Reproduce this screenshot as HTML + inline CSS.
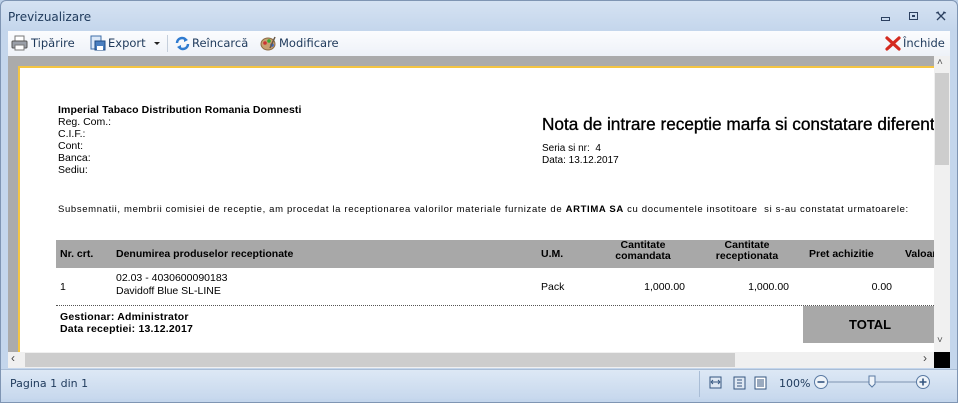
<!DOCTYPE html>
<html><head><meta charset="utf-8"><style>
*{margin:0;padding:0;box-sizing:border-box}
body{width:958px;height:403px;overflow:hidden;background:#bcd0e8;font-family:"Liberation Sans",sans-serif;position:relative}
.a{position:absolute;white-space:nowrap}
.ui{font-family:"DejaVu Sans","Liberation Sans",sans-serif;font-size:11.5px;color:#1e395b}
.doc{font-size:10px;color:#000;font-family:"Liberation Sans",sans-serif}
.b{font-weight:bold}
</style></head><body>
<div class="a" style="left:0;top:0;width:958px;height:403px;border:1px solid #7f95b3;border-radius:6px 6px 0 0;background:linear-gradient(#d5e2f2,#c4d6ec 30px,#c4d6ec)"></div>
<div class="a ui" style="left:8px;top:10px;font-size:12px;color:#1e395b">Previzualizare</div>
<div class="a" style="left:881px;top:17px;width:9px;height:4px;border:1px solid #2c4060"></div>
<div class="a" style="left:909px;top:12px;width:9px;height:8px;border:1px solid #2c4060"><div style="margin:2px;width:3px;height:2px;border:1px solid #2c4060"></div></div>
<svg class="a" style="left:935px;top:11px" width="12" height="11"><path d="M2 1l8 8M10 1L2 9" stroke="#2c4060" stroke-width="1.3"/><path d="M1 2l3-1M11 2l-3-1" stroke="#2c4060"/></svg>
<div class="a" style="left:8px;top:31px;width:942px;height:25px;background:linear-gradient(#fbfcfe,#eef2f8)"></div>
<svg class="a" style="left:11px;top:35px" width="18" height="16"><rect x="4" y="1" width="9" height="5" fill="#fff" stroke="#777"/><rect x="1" y="6" width="15" height="7" rx="1" fill="#9a9fa8" stroke="#555"/><rect x="4" y="10" width="9" height="5" fill="#fff" stroke="#777"/></svg>
<div class="a ui" style="left:31px;top:36px">Tipărire</div>
<svg class="a" style="left:90px;top:35px" width="16" height="16"><rect x="1" y="1" width="10" height="13" fill="#dbe8f8" stroke="#3f6ea8"/><rect x="5" y="6" width="10" height="9" fill="#4a7fc0" stroke="#1f4b85"/><rect x="7" y="11" width="6" height="4" fill="#fff"/></svg>
<div class="a ui" style="left:108px;top:36px">Export</div>
<div class="a" style="left:154px;top:42px;border-left:3px solid transparent;border-right:3px solid transparent;border-top:3px solid #222"></div>
<div class="a" style="left:167px;top:35px;width:1px;height:17px;background:#c5cfdc"></div>
<svg class="a" style="left:174px;top:35px" width="17" height="16"><path d="M3 8a5 5 0 0 1 9-3" stroke="#2f7bd0" stroke-width="2.5" fill="none"/><path d="M10 2l4 3-4 2z" fill="#2f7bd0"/><path d="M14 9a5 5 0 0 1-9 3" stroke="#2f7bd0" stroke-width="2.5" fill="none"/><path d="M7 15l-4-3 4-2z" fill="#2f7bd0"/></svg>
<div class="a ui" style="left:192px;top:36px">Reîncarcă</div>
<svg class="a" style="left:260px;top:35px" width="17" height="16"><ellipse cx="8" cy="9" rx="7" ry="6" fill="#c8a070" stroke="#8a6a44"/><circle cx="5" cy="8" r="1.8" fill="#c33"/><circle cx="9" cy="6" r="1.8" fill="#3a3"/><circle cx="12" cy="10" r="1.8" fill="#36c"/><path d="M10 13l5-11" stroke="#654" stroke-width="1.5"/></svg>
<div class="a ui" style="left:279px;top:36px">Modificare</div>
<svg class="a" style="left:885px;top:36px" width="16" height="15"><path d="M2 2l12 11M14 2L2 13" stroke="#d42a1f" stroke-width="3.2" stroke-linecap="round"/></svg>
<div class="a ui" style="left:903px;top:36px">Închide</div>
<div class="a" style="left:8px;top:56px;width:926px;height:296px;background:#ababab;overflow:hidden">
 <div class="a" style="left:10px;top:10px;width:930px;height:300px;background:#fff;border-left:2px solid #f4c542;border-top:2px solid #f4c542"></div>
</div>
<div class="a" style="left:19px;top:67px;width:915px;height:285px;overflow:hidden">
 <div class="a doc b" style="left:39px;top:37px;font-size:10.5px;letter-spacing:0.1px">Imperial Tabaco Distribution Romania Domnesti</div>
 <div class="a doc" style="left:39px;top:49px;line-height:12px;font-size:10.5px">Reg. Com.:<br>C.I.F.:<br>Cont:<br>Banca:<br>Sediu:</div>
 <div class="a doc" style="left:523px;top:47px;font-size:17.2px;-webkit-text-stroke:0.35px #000">Nota de intrare receptie marfa si constatare diferente</div>
 <div class="a doc" style="left:523px;top:76px;line-height:11.5px">Seria si nr:&nbsp; 4<br>Data: 13.12.2017</div>
 <div class="a doc" style="left:39px;top:137px;font-size:9.5px;letter-spacing:0.65px">Subsemnatii, membrii comisiei de receptie, am procedat la receptionarea valorilor materiale furnizate de <b>ARTIMA SA</b> cu documentele insotitoare&nbsp; si s-au constatat urmatoarele:</div>
 <div class="a" style="left:37px;top:173px;width:880px;height:28px;background:#a8a8a8"></div>
 <div class="a doc b" style="left:41px;top:181px;font-size:10.5px">Nr. crt.</div>
 <div class="a doc b" style="left:97px;top:181px;font-size:10.5px">Denumirea produselor receptionate</div>
 <div class="a doc b" style="left:522px;top:181px;font-size:10.5px">U.M.</div>
 <div class="a doc b" style="left:574px;top:173px;width:100px;text-align:center;line-height:11px;font-size:10.5px">Cantitate<br>comandata</div>
 <div class="a doc b" style="left:678px;top:173px;width:100px;text-align:center;line-height:11px;font-size:10.5px">Cantitate<br>receptionata</div>
 <div class="a doc b" style="left:790px;top:181px;font-size:10.5px">Pret achizitie</div>
 <div class="a doc b" style="left:886px;top:181px;font-size:10.5px">Valoare</div>
 <div class="a doc" style="left:41px;top:214px;font-size:10.5px">1</div>
 <div class="a doc" style="left:97px;top:205px;line-height:13px;font-size:10.5px">02.03 - 4030600090183<br>Davidoff Blue SL-LINE</div>
 <div class="a doc" style="left:522px;top:214px;font-size:10.5px">Pack</div>
 <div class="a doc" style="left:566px;top:214px;width:100px;text-align:right;font-size:10.5px">1,000.00</div>
 <div class="a doc" style="left:670px;top:214px;width:100px;text-align:right;font-size:10.5px">1,000.00</div>
 <div class="a doc" style="left:773px;top:214px;width:100px;text-align:right;font-size:10.5px">0.00</div>
 <div class="a" style="left:37px;top:238px;width:880px;border-top:1px dotted #555"></div>
 <div class="a doc b" style="left:41px;top:244px;line-height:12px;font-size:10.5px;letter-spacing:0.2px">Gestionar: Administrator<br>Data receptiei: 13.12.2017</div>
 <div class="a" style="left:784px;top:239px;width:140px;height:37px;background:#a8a8a8"></div>
 <div class="a doc b" style="left:830px;top:250px;font-size:13px">TOTAL</div>
</div>
<div class="a" style="left:934px;top:56px;width:16px;height:296px;background:#f0f0f0"></div>
<div class="a" style="left:935px;top:73px;width:14px;height:92px;background:#cdcdcd"></div>
<div class="a" style="left:937px;top:57px;font-size:10px;color:#555">˄</div>
<div class="a" style="left:937px;top:335px;font-size:10px;color:#555">˅</div>
<div class="a" style="left:8px;top:352px;width:926px;height:16px;background:#f0f0f0"></div>
<div class="a" style="left:25px;top:353px;width:710px;height:14px;background:#cdcdcd"></div>
<div class="a" style="left:11px;top:351px;font-size:12px;color:#444">‹</div>
<div class="a" style="left:923px;top:351px;font-size:12px;color:#444">›</div>
<div class="a" style="left:934px;top:352px;width:16px;height:16px;background:#000"></div>
<div class="a" style="left:1px;top:369px;width:956px;height:30px;background:linear-gradient(#dde8f5,#c7d8ed);border-top:1px solid #a9bdd6"></div>
<div class="a ui" style="left:10px;top:377px;font-size:11px">Pagina 1 din 1</div>
<div class="a" style="left:699px;top:371px;width:1px;height:26px;background:#a9bdd6"></div>
<svg class="a" style="left:708px;top:375px" width="72" height="16"><rect x="2" y="2" width="11" height="11" fill="#dfe8f3" stroke="#34557f"/><path d="M4 7h7M3 7l2-2M3 7l2 2M12 7l-2-2M12 7l-2 2" stroke="#34557f"/><rect x="26" y="2" width="11" height="12" fill="#dfe8f3" stroke="#34557f"/><path d="M29 5h5M29 8h5M29 11h5" stroke="#34557f"/><rect x="47" y="2" width="11" height="12" fill="#fff" stroke="#34557f"/><path d="M49 5h7M49 7h7M49 9h7M49 11h7" stroke="#34557f"/></svg>
<div class="a ui" style="left:779px;top:377px;font-size:11px">100%</div>
<svg class="a" style="left:812px;top:373px" width="120" height="18"><circle cx="9" cy="9" r="6.5" fill="#eef3f9" stroke="#5a7aa3"/><path d="M5.5 9h7" stroke="#34557f" stroke-width="1.6"/><path d="M16 9h93" stroke="#7d93b0"/><path d="M57 3h6v8l-3 3-3-3z" fill="#eef3f9" stroke="#5a7aa3"/><circle cx="111" cy="9" r="6.5" fill="#eef3f9" stroke="#5a7aa3"/><path d="M107.5 9h7M111 5.5v7" stroke="#34557f" stroke-width="1.6"/></svg>
</body></html>
